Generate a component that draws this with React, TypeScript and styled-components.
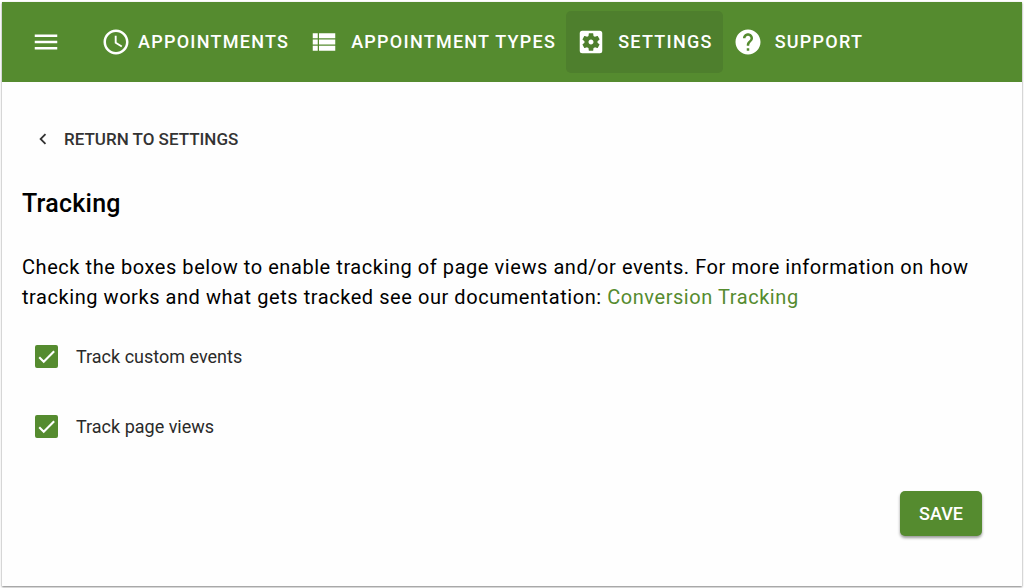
import React, { useState } from "react";
import styled, { createGlobalStyle } from "styled-components";
import {
  MdChevronLeft,
  MdHelp,
  MdMenu,
  MdSchedule,
  MdSettingsApplications,
  MdViewList,
} from "react-icons/md";

const green = "#558b2f";

const GlobalStyle = createGlobalStyle`
  *, *::before, *::after { box-sizing: border-box; }
  body {
    margin: 0;
    background: #ffffff;
    color: #000000;
    font-family: Roboto, "Liberation Sans", sans-serif;
    font-size: 20px;
    line-height: 30px;
  }
  button { font: inherit; border: 0; cursor: pointer; }
`;

const Page = styled.div`
  display: flex;
  min-height: 100vh;
  padding: 2px;
`;

const Card = styled.div`
  flex: 1;
  display: flex;
  flex-direction: column;
  background: #fefefe;
  box-shadow: 0 1px 2px rgba(0, 0, 0, 0.5);
`;

const Header = styled.header`
  display: flex;
  align-items: center;
  min-height: 80px;
  padding: 0 20px;
  background: ${green};
  color: #ffffff;
`;

const MenuButton = styled.button`
  display: flex;
  margin-right: 21px;
  padding: 9px;
  background: transparent;
  color: inherit;
`;

const Nav = styled.nav`
  display: flex;
  align-items: center;
`;

const NavLink = styled.a<{ $active?: boolean; $gap: number }>`
  display: flex;
  align-items: center;
  gap: ${(p) => p.$gap}px;
  height: 62px;
  padding: 0 10px;
  border-radius: 5px;
  background: ${(p) => (p.$active ? "#4e7f2d" : "transparent")};
  color: inherit;
  font-size: 18px;
  font-weight: 500;
  letter-spacing: 0.07em;
  text-decoration: none;
  text-transform: uppercase;
  white-space: nowrap;
`;

const Main = styled.main`
  flex: 1;
  display: flex;
  flex-direction: column;
  align-items: flex-start;
  padding: 34px 40px 50px 20px;
`;

const BackLink = styled.a`
  display: flex;
  align-items: center;
  gap: 10px;
  height: 45px;
  padding: 0 10px;
  color: #333333;
  font-size: 17px;
  font-weight: 500;
  text-decoration: none;
  text-transform: uppercase;
`;

const Title = styled.h1`
  margin: 28px 0 33px;
  font-size: 25px;
  font-weight: 500;
  letter-spacing: 0.01em;
  line-height: 30px;
`;

const Intro = styled.p`
  margin: 0;
  letter-spacing: 0.028em;
`;

const DocLink = styled.a`
  color: ${green};
  text-decoration: none;
`;

const Options = styled.form`
  display: flex;
  flex-direction: column;
  align-self: stretch;
  gap: 19px;
  margin-top: 19px;
`;

const Option = styled.label`
  display: flex;
  align-items: center;
  align-self: flex-start;
  gap: 18px;
  height: 51px;
  padding: 0 13px;
  color: #2a2a2a;
  font-size: 18px;
`;

const BoxWrap = styled.span`
  display: grid;
  width: 23px;
  height: 23px;

  > * {
    grid-area: 1 / 1;
  }
`;

const Box = styled.input`
  appearance: none;
  width: 100%;
  height: 100%;
  margin: 0;
  border: 2px solid #757575;
  border-radius: 2px;

  &:checked {
    border-color: ${green};
    background: ${green};
  }
`;

const Tick = styled.svg`
  width: 100%;
  height: 100%;
  padding: 3px;
  fill: none;
  stroke: #ffffff;
  stroke-width: 3;
  pointer-events: none;
`;

const SaveButton = styled.button`
  align-self: flex-end;
  height: 45px;
  margin-top: 20px;
  padding: 0 19px;
  border-radius: 5px;
  background: ${green};
  color: #ffffff;
  font-size: 18px;
  font-weight: 500;
  text-transform: uppercase;
  box-shadow: 0 2px 3px rgba(0, 0, 0, 0.4);
`;

const navItems = [
  { label: "Appointments", Icon: MdSchedule, gap: 7 },
  { label: "Appointment Types", Icon: MdViewList, gap: 12 },
  { label: "Settings", Icon: MdSettingsApplications, gap: 12, active: true },
  { label: "Support", Icon: MdHelp, gap: 12 },
];

function TrackOption({ id, label }: { id: string; label: string }) {
  const [checked, setChecked] = useState(true);
  return (
    <Option htmlFor={id}>
      <BoxWrap>
        <Box
          id={id}
          type="checkbox"
          checked={checked}
          onChange={(e) => setChecked(e.target.checked)}
        />
        {checked && (
          <Tick viewBox="0 0 24 24" aria-hidden="true">
            <path d="M1.73 12.91 8.1 19.28 22.79 4.59" />
          </Tick>
        )}
      </BoxWrap>
      {label}
    </Option>
  );
}

export default function App() {
  return (
    <>
      <GlobalStyle />
      <Page>
        <Card>
          <Header>
            <MenuButton type="button" aria-label="Menu">
              <MdMenu size={30} />
            </MenuButton>
            <Nav>
              {navItems.map(({ label, Icon, gap, active }) => (
                <NavLink key={label} href="#" $gap={gap} $active={active}>
                  <Icon size={30} />
                  {label}
                </NavLink>
              ))}
            </Nav>
          </Header>
          <Main>
            <BackLink href="#">
              <MdChevronLeft size={22} />
              Return to settings
            </BackLink>
            <Title>Tracking</Title>
            <Intro>
              Check the boxes below to enable tracking of page views and/or events. For more
              information on how tracking works and what gets tracked see our documentation:{" "}
              <DocLink href="#">Conversion Tracking</DocLink>
            </Intro>
            <Options onSubmit={(e) => e.preventDefault()}>
              <TrackOption id="track-events" label="Track custom events" />
              <TrackOption id="track-views" label="Track page views" />
              <SaveButton type="submit">Save</SaveButton>
            </Options>
          </Main>
        </Card>
      </Page>
    </>
  );
}
